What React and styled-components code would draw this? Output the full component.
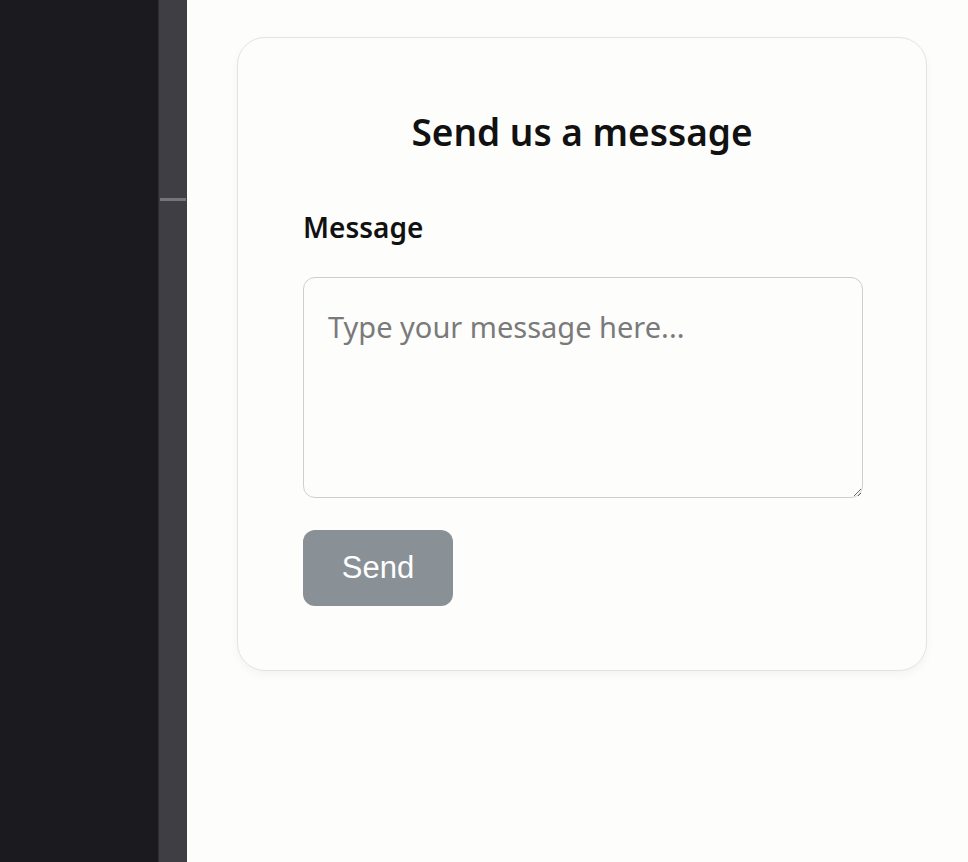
import React from "react";
import styled, { createGlobalStyle } from "styled-components";

const Global = createGlobalStyle`
  html, body { margin: 0; padding: 0; height: 100%; }
  body { background: #fdfdfc; font-family: "Noto Sans", "Open Sans", sans-serif; }
  #root { height: 100%; }
`;

const Page = styled.div`
  display: flex;
  height: 862px;
  overflow: hidden;
`;

const Sidebar = styled.div`
  width: 158px;
  flex: none;
  background: #1b1a1f;
`;

const Rail = styled.div`
  width: 29px;
  flex: none;
  background: #3f3e44;
  border-left: 1px solid #2e2d33;
  display: flex;
  flex-direction: column;
  padding-top: 198px;
  box-sizing: border-box;
`;

const RailMark = styled.div`
  height: 3px;
  margin: 0 1px;
  background: #76767a;
`;

const Main = styled.main`
  flex: 1;
  background: #fdfdfc;
  padding: 37px 40px 0 50px;
`;

const Card = styled.section`
  width: 690px;
  box-sizing: border-box;
  border: 1px solid #e3e3e1;
  border-radius: 28px;
  background: #fdfdfc;
  box-shadow: 0 4px 10px rgba(0, 0, 0, 0.04);
  padding: 70px 65px 64px;
  display: flex;
  flex-direction: column;
`;

const Title = styled.h2`
  margin: 0 0 54px;
  text-align: center;
  font-family: "Noto Sans", sans-serif;
  font-weight: 600;
  font-size: 37px;
  line-height: 48px;
  color: #111;
`;

const Label = styled.label`
  font-family: "Noto Sans", sans-serif;
  font-weight: 600;
  font-size: 28px;
  line-height: 34px;
  color: #111;
  margin-bottom: 33px;
`;

const TextArea = styled.textarea`
  box-sizing: border-box;
  width: 560px;
  height: 221px;
  border: 1.5px solid #cfcfcd;
  border-radius: 12px;
  background: #fdfdfc;
  padding: 30px 24px;
  font-family: "Noto Sans", sans-serif;
  font-size: 29px;
  line-height: 38px;
  color: #222;
  resize: vertical;
  outline: none;
  &::placeholder { color: #7a7a7a; }
`;

const Button = styled.button`
  margin-top: 32px;
  align-self: flex-start;
  width: 150px;
  height: 76px;
  border: none;
  border-radius: 12px;
  background: #8a9196;
  color: #fff;
  font-family: "Liberation Sans", Arial, sans-serif;
  font-size: 31px;
  cursor: pointer;
`;

export default function App() {
  return (
    <>
      <Global />
      <Page>
        <Sidebar />
        <Rail>
          <RailMark />
        </Rail>
        <Main>
          <Card>
            <Title>Send us a message</Title>
            <Label htmlFor="msg">Message</Label>
            <TextArea id="msg" placeholder="Type your message here..." />
            <Button disabled>Send</Button>
          </Card>
        </Main>
      </Page>
    </>
  );
}
